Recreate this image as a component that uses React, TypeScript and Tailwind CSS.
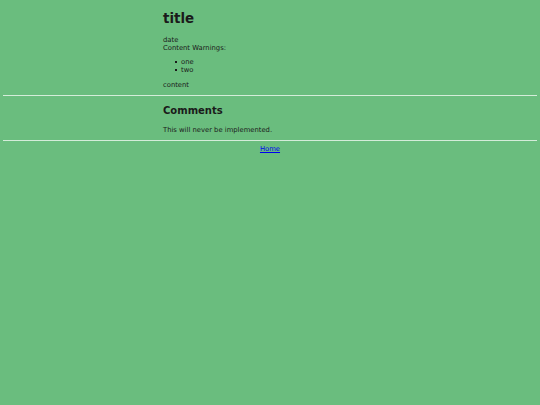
export default function App() {
  return (
    <div
      className="min-h-screen bg-[#6abd7e] px-[3.4px] pt-px text-[#1a1a1a] text-[6.8px] leading-[8px]"
      style={{ fontFamily: "'DejaVu Sans', sans-serif" }}
    >
      {/* Post */}
      <article className="w-[214px] mx-auto">
        <h1 className="mt-[10px] mb-[9px] text-[13.4px] leading-[15.6px] font-bold">title</h1>
        <div>date</div>
        <div>Content Warnings:</div>
        <ul className="my-[6.7px] pl-[12px]">
          {["one", "two"].map((w) => (
            <li key={w} className="flex items-center">
              <span className="w-[2px] h-[2px] bg-current mr-[4px]" />
              {w}
            </li>
          ))}
        </ul>
        <p className="mt-[6.7px] mb-[5.7px]">content</p>
      </article>

      <hr className="border-0 h-px bg-[#d4ecd9] my-[3px]" />

      {/* Comments */}
      <section className="w-[214px] mx-auto">
        <h2 className="mt-[9px] mb-[10px] text-[10px] leading-[11.6px] font-bold">Comments</h2>
        <p className="mt-[6.7px] mb-[5.7px]">This will never be implemented.</p>
      </section>

      <hr className="border-0 h-px bg-[#d4ecd9] mt-[3px] mb-[4px]" />

      <footer className="text-center">
        <a href="#" className="text-[#0000ee] underline">
          Home
        </a>
      </footer>
    </div>
  );
}
